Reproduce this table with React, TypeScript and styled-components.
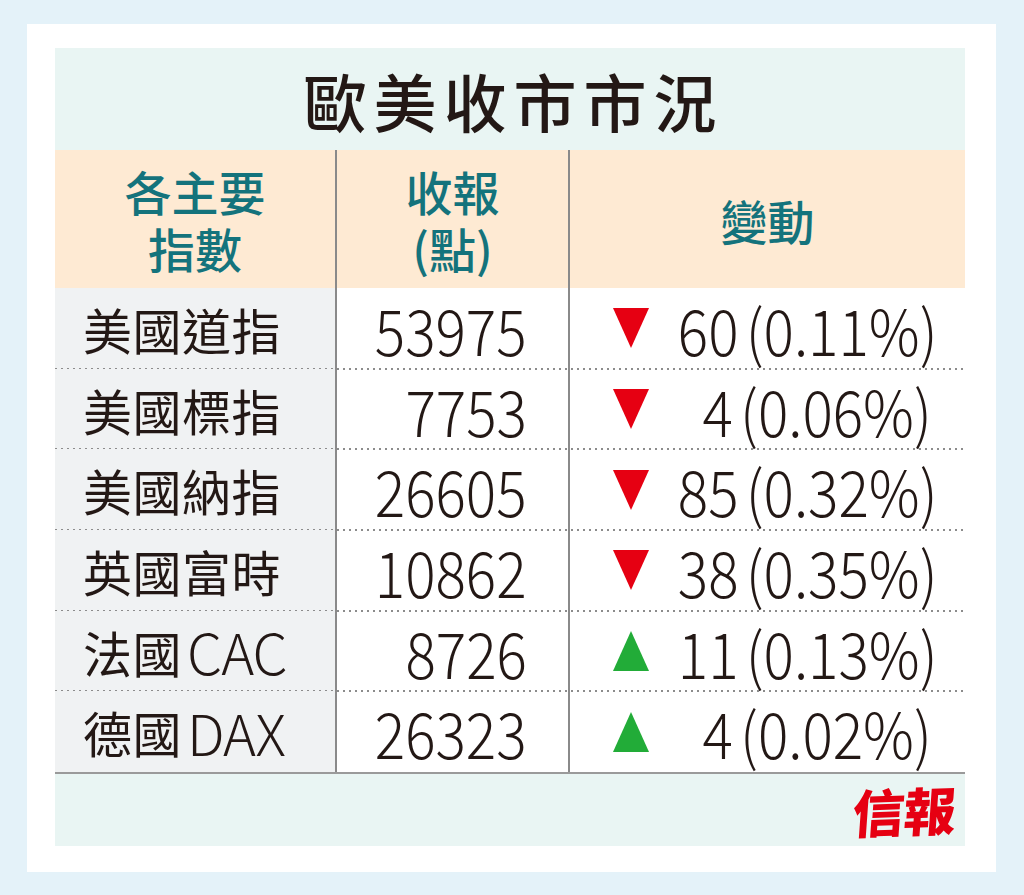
import React from "react";
import styled, { createGlobalStyle } from "styled-components";

const GlobalStyle = createGlobalStyle`
  html, body {
    margin: 0;
    padding: 0;
    background: #e4f2f9;
  }
  body {
    font-family: "Noto Sans CJK TC", "Noto Sans", sans-serif;
    color: #231815;
  }
`;

const Page = styled.div`
  width: 1024px;
  height: 895px;
  padding: 24px 28px 23px 27px;
  box-sizing: border-box;
`;

const Card = styled.div`
  background: #fff;
  height: 848px;
  padding: 24px 31px 26px 28px;
  box-sizing: border-box;
  display: flex;
  flex-direction: column;
`;

const TitleBand = styled.div`
  height: 102px;
  flex: none;
  background: #e9f5f3;
  display: flex;
  align-items: center;
  justify-content: center;
`;

const Title = styled.h1`
  margin: 0;
  font-size: 63px;
  font-weight: 500;
  letter-spacing: 7px;
  padding-left: 7px;
  line-height: 1;
  color: #231815;
`;

const Grid = styled.div`
  display: grid;
  grid-template-columns: 280px 233px 1fr;
`;

const HeaderRow = styled(Grid)`
  height: 138px;
  flex: none;
  background: #feead3;
`;

const HeadCell = styled.div<{ $divider?: boolean }>`
  display: flex;
  align-items: center;
  justify-content: center;
  text-align: center;
  font-size: 47px;
  font-weight: 500;
  line-height: 57px;
  color: #14737c;
  border-left: ${(p) => (p.$divider ? "2px solid #8a8a8a" : "none")};
`;

const Body = styled.div`
  height: 486px;
  flex: none;
  box-sizing: border-box;
  display: flex;
  flex-direction: column;
  border-bottom: 2px solid #9a9a9a;
`;

const Row = styled(Grid)<{ $last?: boolean }>`
  flex: 1;
  min-height: 0;
  line-height: 1;
  position: relative;
  &::after {
    content: "";
    display: ${(p) => (p.$last ? "none" : "block")};
    position: absolute;
    left: 0;
    right: 0;
    bottom: -1px;
    height: 2px;
    background-image: repeating-linear-gradient(
      to right,
      #8c8c8c 0 2px,
      transparent 2px 6px
    );
  }
`;

const NameCell = styled.div`
  background: #f0f2f3;
  display: flex;
  align-items: center;
  padding-left: 28px;
  font-size: 49px;
  font-weight: 400;
  letter-spacing: 0.5px;
`;

const Latin = styled.span`
  font-weight: 300;
  font-size: 56px;
  margin-left: 5px;
  letter-spacing: -1px;
`;

const NumCell = styled.div`
  display: flex;
  align-items: center;
  justify-content: flex-end;
  padding-right: 41px;
  border-left: 2px solid #8a8a8a;
`;

const ChangeCell = styled.div`
  display: flex;
  align-items: center;
  padding-left: 43px;
  padding-right: 33px;
  border-left: 2px solid #8a8a8a;
`;

// narrow light figures, like the print face
const Figures = styled.span<{ $push?: boolean }>`
  display: inline-block;
  margin-left: ${(p) => (p.$push ? "auto" : "0")};
  font-size: 63px;
  font-weight: 300;
  white-space: nowrap;
  transform: scaleX(0.9);
  transform-origin: right center;
`;

const Paren = styled.span`
  margin-left: 8px;
`;

const Footer = styled.div`
  flex: 1;
  background: #e9f5f3;
  display: flex;
  align-items: center;
  justify-content: flex-end;
  padding-right: 10px;
`;

const Logo = styled.span`
  font-size: 52px;
  font-weight: 900;
  color: #e60012;
  letter-spacing: -1px;
  line-height: 1;
  transform: skewX(-6deg) rotate(-2deg);
`;

const Arrow = ({ up }: { up: boolean }) => (
  <svg width="36" height="40" viewBox="0 0 36 40">
    {up ? (
      <polygon points="18,0 36,40 0,40" fill="#22ac38" />
    ) : (
      <polygon points="0,0 36,0 18,40" fill="#e60012" />
    )}
  </svg>
);

type Item = {
  name: string;
  latin?: string;
  close: string;
  up: boolean;
  diff: string;
  pct: string;
};

const items: Item[] = [
  { name: "美國道指", close: "53975", up: false, diff: "60", pct: "0.11%" },
  { name: "美國標指", close: "7753", up: false, diff: "4", pct: "0.06%" },
  { name: "美國納指", close: "26605", up: false, diff: "85", pct: "0.32%" },
  { name: "英國富時", close: "10862", up: false, diff: "38", pct: "0.35%" },
  { name: "法國", latin: "CAC", close: "8726", up: true, diff: "11", pct: "0.13%" },
  { name: "德國", latin: "DAX", close: "26323", up: true, diff: "4", pct: "0.02%" },
];

const App: React.FC = () => {
  return (
    <>
      <GlobalStyle />
      <Page>
        <Card>
          <TitleBand>
            <Title>歐美收市市況</Title>
          </TitleBand>
          <HeaderRow>
            <HeadCell>
              各主要
              <br />
              指數
            </HeadCell>
            <HeadCell $divider>
              收報
              <br />
              (點)
            </HeadCell>
            <HeadCell $divider>變動</HeadCell>
          </HeaderRow>
          <Body>
            {items.map((it, i) => (
              <Row key={it.name + i} $last={i === items.length - 1}>
                <NameCell>
                  {it.name}
                  {it.latin && <Latin>{it.latin}</Latin>}
                </NameCell>
                <NumCell>
                  <Figures>{it.close}</Figures>
                </NumCell>
                <ChangeCell>
                  <Arrow up={it.up} />
                  <Figures $push>
                    {it.diff}
                    <Paren>({it.pct})</Paren>
                  </Figures>
                </ChangeCell>
              </Row>
            ))}
          </Body>
          <Footer>
            <Logo>信報</Logo>
          </Footer>
        </Card>
      </Page>
    </>
  );
};

export default App;
